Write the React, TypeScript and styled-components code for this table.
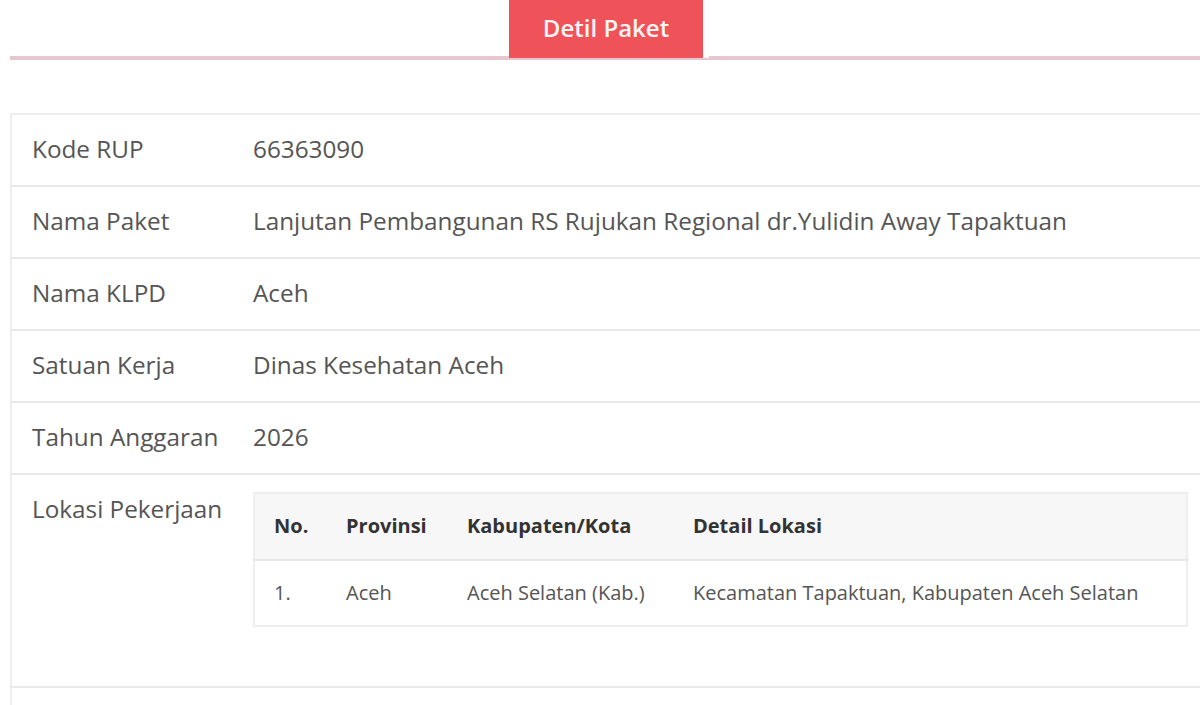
import React from "react";
import styled, { createGlobalStyle } from "styled-components";

const GlobalStyle = createGlobalStyle`
  html, body {
    margin: 0;
    padding: 0;
    background: #ffffff;
    overflow: hidden;
  }
  body {
    font-family: "Open Sans", "Noto Sans", "DejaVu Sans", sans-serif;
    color: #555555;
  }
`;

const Page = styled.div`
  width: 1200px;
  height: 705px;
  overflow: hidden;
  padding-left: 10px;
  box-sizing: border-box;
`;

const TabBar = styled.div`
  display: flex;
  justify-content: center;
  border-bottom: 4px solid #e8c6cd;
  height: 56px;
`;

const Tab = styled.div`
  width: 194px;
  height: 58px;
  background: #f0525a;
  color: #fff5f5;
  font-size: 24px;
  font-weight: 600;
  display: flex;
  align-items: center;
  justify-content: center;
  box-shadow: 6px 0 0 #ffffff;
  margin-left: 2px;
  padding-bottom: 3px;
  box-sizing: border-box;
`;

const InfoTable = styled.table`
  margin-top: 53px;
  width: 1210px;
  border-collapse: collapse;
  border-top: 2px solid #eeeeee;
  border-left: 2px solid #eeeeee;
  font-size: 24.3px;
`;

const Row = styled.tr`
  border-bottom: 2px solid #e9e9e9;
`;

const Label = styled.td`
  width: 199px;
  padding: 16px 0 18px 20px;
  vertical-align: top;
  line-height: 36px;
  color: #555555;
`;

const Value = styled.td`
  padding: 16px 22px 18px 22px;
  vertical-align: top;
  line-height: 36px;
  color: #555555;
`;

const LocValue = styled(Value)`
  padding-top: 17px;
  padding-bottom: 59px;
`;

const LocTable = styled.table`
  width: 935px;
  border-collapse: collapse;
  border: 2px solid #eeeeee;
  font-size: 20px;
  table-layout: fixed;
`;

const HeadRow = styled.tr`
  background: #f7f7f7;
  border-bottom: 2px solid #e8e8e8;
`;

const HeadCell = styled.th<{ $w?: number }>`
  ${(p) => (p.$w ? `width: ${p.$w}px;` : "")}
  text-align: left;
  font-weight: 700;
  color: #333333;
  padding: 14px 0 15px 19px;
  line-height: 36px;
`;

const BodyCell = styled.td`
  padding: 14px 0 14px 19px;
  line-height: 36px;
  color: #555555;
  white-space: nowrap;
`;

const rows: [string, string][] = [
  ["Kode RUP", "66363090"],
  ["Nama Paket", "Lanjutan Pembangunan RS Rujukan Regional dr.Yulidin Away Tapaktuan"],
  ["Nama KLPD", "Aceh"],
  ["Satuan Kerja", "Dinas Kesehatan Aceh"],
  ["Tahun Anggaran", "2026"],
];

export default function App() {
  return (
    <>
      <GlobalStyle />
      <Page>
        <TabBar>
          <Tab>Detil Paket</Tab>
        </TabBar>
        <InfoTable>
          <tbody>
            {rows.map(([k, v]) => (
              <Row key={k}>
                <Label>{k}</Label>
                <Value>{v}</Value>
              </Row>
            ))}
            <Row>
              <Label>Lokasi Pekerjaan</Label>
              <LocValue>
                <LocTable>
                  <thead>
                    <HeadRow>
                      <HeadCell $w={53}>No.</HeadCell>
                      <HeadCell $w={102}>Provinsi</HeadCell>
                      <HeadCell $w={207}>Kabupaten/Kota</HeadCell>
                      <HeadCell>Detail Lokasi</HeadCell>
                    </HeadRow>
                  </thead>
                  <tbody>
                    <tr>
                      <BodyCell>1.</BodyCell>
                      <BodyCell>Aceh</BodyCell>
                      <BodyCell>Aceh Selatan (Kab.)</BodyCell>
                      <BodyCell>Kecamatan Tapaktuan, Kabupaten Aceh Selatan</BodyCell>
                    </tr>
                  </tbody>
                </LocTable>
              </LocValue>
            </Row>
            <Row>
              <Label>Pagu</Label>
              <Value>Rp 40.000.000.000,00</Value>
            </Row>
          </tbody>
        </InfoTable>
      </Page>
    </>
  );
}
